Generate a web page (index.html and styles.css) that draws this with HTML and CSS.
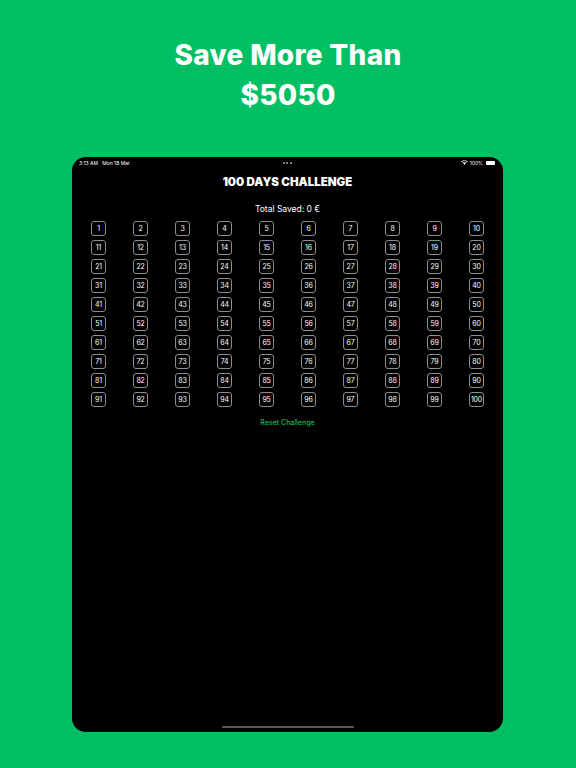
FILE: index.html
```html
<!DOCTYPE html>
<html lang="en">
<head>
    <meta charset="UTF-8">
    <meta name="viewport" content="width=device-width, initial-scale=1.0">
    <title>100 Days Challenge</title>
    <link rel="stylesheet" href="styles.css">
</head>
<body>
    <h1 class="promo">Save More Than<br>$5050</h1>

    <div class="screen">
        <div class="status-bar">
            <span class="status-time">3:13 AM&nbsp;&nbsp;&nbsp;Mon 18 Mar</span>
            <span class="status-dots"><i></i><i></i><i></i></span>
            <span class="status-right">
                <svg class="wifi" width="7" height="5" viewBox="0 0 14 10">
                    <path d="M7 10 L4.6 7.4 A3.4 3.4 0 0 1 9.4 7.4 Z" fill="#fff"/>
                    <path d="M2.6 5.4 A6.3 6.3 0 0 1 11.4 5.4 L10.2 6.6 A4.6 4.6 0 0 0 3.8 6.6 Z" fill="#fff"/>
                    <path d="M0.4 3.2 A9.4 9.4 0 0 1 13.6 3.2 L12.4 4.4 A7.7 7.7 0 0 0 1.6 4.4 Z" fill="#fff"/>
                </svg>
                100%
                <span class="battery"></span>
            </span>
        </div>

        <h2 class="title">100 DAYS CHALLENGE</h2>
        <p class="total">Total Saved: 0 €</p>

        <div class="days" id="days"></div>

        <a class="reset" href="#">Reset Challenge</a>

        <div class="home-bar"></div>
    </div>

    <script>
        var days = document.getElementById('days');
        for (var i = 1; i <= 100; i++) {
            var cell = document.createElement('div');
            cell.className = 'day';
            cell.innerHTML = '<span>' + i + '</span>';
            days.appendChild(cell);
        }
    </script>
</body>
</html>
```

FILE: styles.css
```css
body {
    margin: 0;
    background-color: #02bf63;
    font-family: 'Inter', 'Noto Sans', sans-serif;
    height: 768px;
    overflow: hidden;
}
.promo {
    margin: 35px 0 0;
    color: #ffffff;
    text-align: center;
    font-size: 28px;
    line-height: 40px;
    font-weight: 800;
    letter-spacing: 0.3px;
}
.screen {
    width: 431px;
    height: 575px;
    margin: 42px 0 0 72px;
    background-color: #000;
    border-radius: 14px;
    display: flex;
    flex-direction: column;
    align-items: center;
    color: #fff;
}
.status-bar {
    width: 100%;
    box-sizing: border-box;
    height: 9px;
    padding: 0 8px 0 7px;
    display: flex;
    align-items: center;
    justify-content: space-between;
    font-size: 5px;
    margin-top: 1px;
}
.status-time {
    width: 80px;
}
.status-dots {
    display: flex;
    gap: 1.5px;
}
.status-dots i {
    width: 2px;
    height: 2px;
    border-radius: 50%;
    background-color: #aaa;
}
.status-right {
    width: 80px;
    display: flex;
    justify-content: flex-end;
    align-items: center;
    gap: 2px;
}
.battery {
    width: 9px;
    height: 4px;
    background-color: #fff;
    border-radius: 1px;
    margin-left: 1px;
}
.title {
    margin: 7px 0 0;
    font-size: 11.5px;
    line-height: 16px;
    font-weight: 900;
    letter-spacing: 0;
}
.total {
    margin: 12px 0 0;
    font-size: 8.5px;
    line-height: 14px;
}
.days {
    margin-top: 5px;
    display: grid;
    grid-template-columns: repeat(10, 42px);
    row-gap: 4px;
    justify-items: center;
}
.day {
    width: 15px;
    height: 15px;
    box-sizing: border-box;
    border: 1px solid #8d8d8d;
    border-radius: 3px;
    display: flex;
    align-items: center;
    justify-content: center;
    font-size: 7px;
    letter-spacing: -0.2px;
}
.reset {
    margin-top: 11px;
    color: #13b457;
    font-size: 7px;
    line-height: 10px;
    font-weight: 500;
    text-decoration: none;
}
.home-bar {
    margin-top: auto;
    margin-bottom: 4px;
    width: 132px;
    height: 2px;
    border-radius: 1px;
    background-color: #5a5a5a;
}
```
